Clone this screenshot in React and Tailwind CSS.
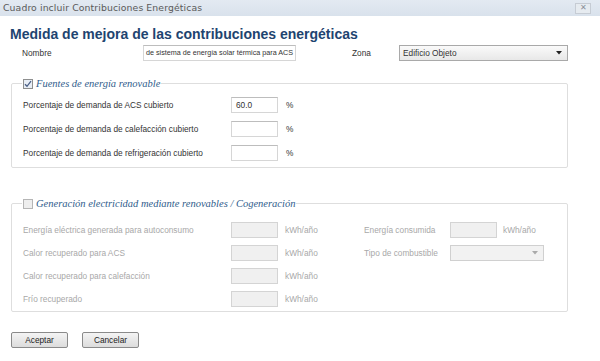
import React from "react";

const sans = { fontFamily: '"Liberation Sans", Arial, sans-serif' };

function TextBox({ value = "", disabled = false, w = "w-[47px]" }) {
  return (
    <div
      className={`${w} h-[16px] border flex items-center px-[4px] text-[8.3px] ${
        disabled
          ? "bg-[#f0f0f0] border-[#d4d4d4]"
          : "bg-white border-[#d6d6d6] border-t-[#bdbdbd] text-[#333]"
      }`}
    >
      {value}
    </div>
  );
}

function Check({ checked }) {
  return (
    <div
      className={`w-[10px] h-[10px] border flex items-center justify-center ${
        checked ? "border-[#8e8f8f] bg-[#e8eef6]" : "border-[#b5b5b5] bg-[#eeeeee]"
      }`}
    >
      {checked && (
        <svg width="8" height="8" viewBox="0 0 8 8">
          <path d="M1 4.2 L3 6.3 L7 1.2" stroke="#4a5f86" strokeWidth="1.3" fill="none" />
        </svg>
      )}
    </div>
  );
}

function Caret({ color = "#222" }) {
  return (
    <svg width="6" height="4" viewBox="0 0 6 4">
      <path d="M0 0 H6 L3 3.5 Z" fill={color} />
    </svg>
  );
}

const legendFont = { fontFamily: '"Liberation Serif", "DejaVu Serif", serif' };

export default function App() {
  return (
    <div className="w-[600px] h-[361px] bg-white flex flex-col overflow-hidden text-[#333]" style={sans}>
      {/* title bar */}
      <div className="h-[16px] bg-gradient-to-b from-[#e3eaf2] to-[#d9e2ec] flex items-center justify-between pl-[3px] pr-[9px]">
        <span className="text-[#5a5a5a] tracking-[0.1px]" style={{ fontFamily: '"DejaVu Sans", sans-serif', fontSize: "9.3px" }}>
          Cuadro incluir Contribuciones Energéticas
        </span>
        <div className="w-[16px] h-[11px] border border-[#c6ccd4] bg-[#e6ebf0] flex items-center justify-center text-[8px] text-[#8a9099] leading-none">
          ✕
        </div>
      </div>

      <div className="pl-[10px] pr-[32px]">
        <div className="mt-[10px] h-[16px] text-[14px] font-bold text-[#1e4470] leading-[16px]">
          Medida de mejora de las contribuciones energéticas
        </div>

        {/* Nombre / Zona */}
        <div className="mt-[3px] h-[16px] flex items-center text-[8.3px] text-[#333]">
          <span className="ml-[12px] w-[121px]">Nombre</span>
          <div className="w-[153px] h-[16px] border border-[#d6d6d6] border-t-[#bdbdbd] bg-white flex items-center px-[2px] whitespace-nowrap text-[7.2px]">
            de sistema de energía solar térmica para ACS
          </div>
          <span className="ml-[56px] w-[47px]">Zona</span>
          <div className="w-[169px] h-[16px] border border-[#a9a9a9] bg-gradient-to-b from-[#fafafa] to-[#e8e8e8] flex items-center justify-between px-[3px] pr-[5px]">
            <span>Edificio Objeto</span>
            <Caret />
          </div>
        </div>

        {/* Fieldset 1 */}
        <fieldset className="mt-[15px] ml-[1px] w-[557px] h-[92px] border border-[#dedede] rounded-[2px] px-[11px] pt-[5px]">
          <legend className="ml-[-1px] px-[1px] flex items-center gap-[3px]">
            <Check checked />
            <span className="italic text-[10.5px] text-[#2f5d8c]" style={legendFont}>
              Fuentes de energía renovable
            </span>
          </legend>
          <div className="flex flex-col gap-[8px] text-[8.3px] text-[#333]">
            {[
              ["Porcentaje de demanda de ACS cubierto", "60.0"],
              ["Porcentaje de demanda de calefacción cubierto", ""],
              ["Porcentaje de demanda de refrigeración cubierto", ""],
            ].map(([l, v]) => (
              <div key={l} className="flex items-center h-[16px]">
                <span className="w-[208px]">{l}</span>
                <TextBox value={v} />
                <span className="ml-[8px]">%</span>
              </div>
            ))}
          </div>
        </fieldset>

        {/* Fieldset 2 */}
        <fieldset className="mt-[28px] ml-[1px] w-[557px] h-[116px] border border-[#dedede] rounded-[2px] px-[11px] pt-[10px]">
          <legend className="ml-[-1px] px-[1px] flex items-center gap-[3px]">
            <Check />
            <span className="italic text-[10.5px] text-[#2f5d8c]" style={legendFont}>
              Generación electricidad mediante renovables / Cogeneración
            </span>
          </legend>
          <div className="flex flex-col gap-[7px] text-[8.3px] text-[#a8a8a8]">
            <div className="flex items-center h-[16px]">
              <span className="w-[208px]">Energía eléctrica generada para autoconsumo</span>
              <TextBox disabled />
              <span className="ml-[7px] w-[79px]">kWh/año</span>
              <span className="w-[86px]">Energía consumida</span>
              <TextBox disabled />
              <span className="ml-[6px]">kWh/año</span>
            </div>
            <div className="flex items-center h-[16px]">
              <span className="w-[208px]">Calor recuperado para ACS</span>
              <TextBox disabled />
              <span className="ml-[7px] w-[79px]">kWh/año</span>
              <span className="w-[86px]">Tipo de combustible</span>
              <div className="w-[94px] h-[16px] border border-[#d0d0d0] bg-[#f2f2f2] flex items-center justify-end pr-[5px]">
                <Caret color="#aaa" />
              </div>
            </div>
            <div className="flex items-center h-[16px]">
              <span className="w-[208px]">Calor recuperado para calefacción</span>
              <TextBox disabled />
              <span className="ml-[7px]">kWh/año</span>
            </div>
            <div className="flex items-center h-[16px]">
              <span className="w-[208px]">Frío recuperado</span>
              <TextBox disabled />
              <span className="ml-[7px]">kWh/año</span>
            </div>
          </div>
        </fieldset>

        {/* Buttons */}
        <div className="mt-[20px] ml-[1px] flex gap-[14px] text-[8.3px] text-[#222]">
          <div className="w-[57px] h-[16px] border border-[#8a8a8a] rounded-[2px] bg-gradient-to-b from-[#f4f4f4] to-[#dcdcdc] flex items-center justify-center">
            Aceptar
          </div>
          <div className="w-[57px] h-[16px] border border-[#8a8a8a] rounded-[2px] bg-gradient-to-b from-[#f4f4f4] to-[#dcdcdc] flex items-center justify-center">
            Cancelar
          </div>
        </div>
      </div>
    </div>
  );
}
